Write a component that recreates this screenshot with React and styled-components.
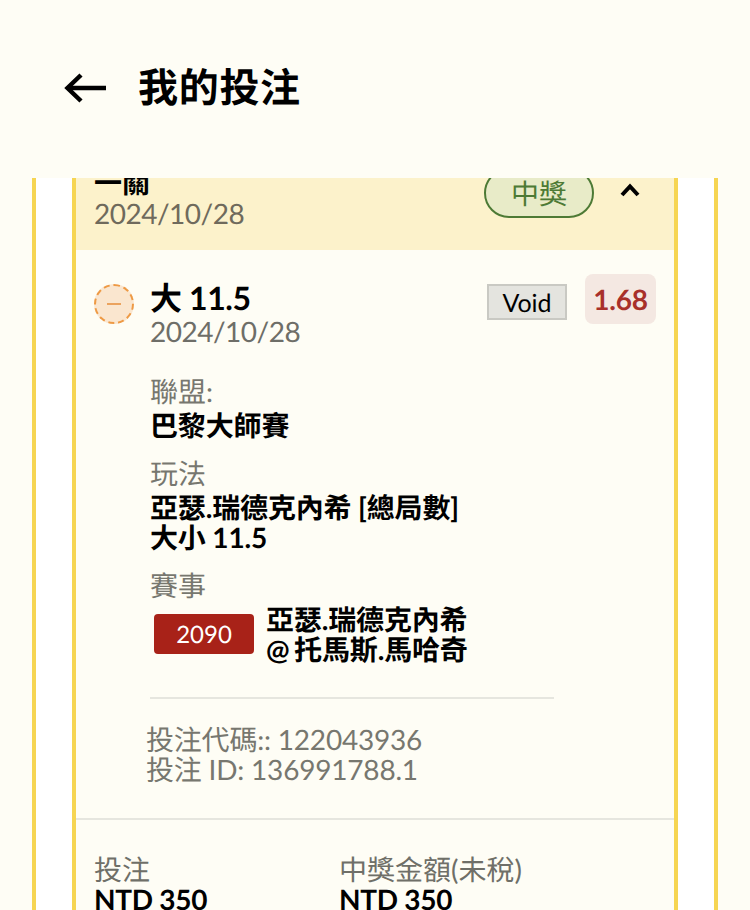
import React from "react";
import styled, { createGlobalStyle } from "styled-components";

const GlobalStyle = createGlobalStyle`
  html, body { margin: 0; padding: 0; background: #fefdf5; }
  body {
    font-family: Lato, "Noto Sans CJK TC", sans-serif;
    color: #000;
    text-rendering: geometricPrecision;
  }
`;

const Page = styled.div`
  width: 750px;
  height: 910px;
  display: flex;
  flex-direction: column;
  overflow: hidden;
  background: #fefdf5;
`;

const Header = styled.header`
  height: 178px;
  flex-shrink: 0;
  display: flex;
  align-items: center;
  padding: 0 0 0 64px;
  box-sizing: border-box;
`;

const BackIcon = styled.svg`
  width: 42px;
  height: 32px;
  margin: -2px 32px 0 0;
`;

const Title = styled.h1`
  margin: -4px 0 0;
  font-size: 40px;
  line-height: 48px;
  font-weight: 700;
  letter-spacing: 0.7px;
`;

const Scroller = styled.main`
  flex: 1;
  overflow: hidden;
`;

const OuterCard = styled.section`
  margin: -20px 32px 0;
  padding: 0 36px;
  background: #fff;
  border-left: 4px solid #f6d552;
  border-right: 4px solid #f6d552;
`;

const InnerCard = styled.div`
  background: #fefdf5;
  border-left: 4px solid #f6d552;
  border-right: 4px solid #f6d552;
`;

const CardHead = styled.div`
  height: 92px;
  box-sizing: border-box;
  padding: 0 34px 0 18px;
  background: #fcf2cb;
  display: flex;
  justify-content: space-between;
`;

const HeadText = styled.div`
  padding-top: 9px;
`;

const Parlay = styled.div`
  font-size: 28px;
  line-height: 30px;
  font-weight: 700;
`;

const DateText = styled.div`
  font-size: 28px;
  line-height: 32px;
  letter-spacing: -0.5px;
  color: #6f6a5c;
`;

const HeadRight = styled.div`
  display: flex;
  align-items: flex-start;
  gap: 26px;
`;

const StatusPill = styled.div`
  width: 110px;
  height: 50px;
  margin-top: 10px;
  box-sizing: border-box;
  border: 2px solid #4d7a35;
  border-radius: 25px;
  background: #e8ebc8;
  color: #4d7a35;
  font-size: 28px;
  line-height: 46px;
  text-align: center;
`;

const Chevron = styled.svg`
  width: 20px;
  height: 14px;
  margin-top: 25px;
`;

const Leg = styled.div`
  padding: 24px 18px 0;
  display: grid;
  grid-template-columns: 40px 1fr auto auto;
  column-gap: 16px;
  align-items: start;
  border-bottom: 2px solid #e6e6df;
`;

const LegIcon = styled.div`
  width: 40px;
  height: 40px;
  margin-top: 10px;
  box-sizing: border-box;
  border: 2px dashed #ee9a45;
  border-radius: 50%;
  background: #fae6cf;
  display: flex;
  align-items: center;
  justify-content: center;
  &::before {
    content: "";
    width: 14px;
    height: 2px;
    background: #eba35e;
  }
`;

const LegTitle = styled.div`
  font-size: 32px;
  line-height: 34px;
  font-weight: 700;
  letter-spacing: -0.4px;
  margin-top: 7px;
`;

const LegDate = styled(DateText)`
  color: #6e6e68;
`;

const VoidTag = styled.div`
  width: 80px;
  height: 36px;
  margin: 10px 2px 0 0;
  box-sizing: border-box;
  border: 2px solid #c9c9c3;
  background: #e4e4df;
  font-size: 25px;
  line-height: 35px;
  text-align: center;
`;

const Odds = styled.div`
  width: 71px;
  height: 50px;
  border-radius: 8px;
  background: #f4e8e2;
  color: #a8302a;
  font-size: 28px;
  font-weight: 700;
  letter-spacing: -0.2px;
  line-height: 50px;
  text-align: center;
`;

const Details = styled.div`
  grid-column: 1 / -1;
  padding: 28px 0 0 56px;
`;

const Label = styled.div`
  font-size: 28px;
  line-height: 32px;
  color: #77776f;
`;

const Value = styled.div`
  font-size: 28px;
  line-height: 30px;
  font-weight: 700;
  letter-spacing: -0.15px;
  margin: 3px 0 17px;
`;

const MatchRow = styled.div`
  display: flex;
  align-items: center;
  gap: 12px;
  margin: 3px 0 0 4px;
`;

const MatchNo = styled.div`
  width: 100px;
  height: 40px;
  border-radius: 4px;
  background: #a82218;
  color: #fff;
  font-size: 24px;
  line-height: 41px;
  text-align: center;
`;

const Teams = styled(Value)`
  margin: 0;
  word-spacing: -2px;
`;

const Rule = styled.hr`
  width: 404px;
  height: 2px;
  margin: 33px 0 25px;
  border: 0;
  background: #e6e6df;
`;

const Codes = styled.div`
  margin-left: -4px;
  padding-bottom: 34px;
  font-size: 28px;
  line-height: 30px;
  letter-spacing: -0.2px;
  color: #77776f;
`;

const Totals = styled.div`
  display: grid;
  grid-template-columns: 245px 1fr;
  padding: 34px 18px 0 18px;
`;

const TotalLabel = styled.div`
  font-size: 28px;
  line-height: 30px;
  color: #6f6f68;
`;

const TotalValue = styled.div`
  font-size: 28px;
  line-height: 30px;
  font-weight: 700;
  letter-spacing: -0.3px;
`;

const totals = [
  { label: "投注", value: "NTD 350" },
  { label: "中獎金額(未稅)", value: "NTD 350" },
];

export default function App() {
  return (
    <Page>
      <GlobalStyle />
      <Header>
        <BackIcon viewBox="0 0 42 32" fill="none" stroke="#000" strokeWidth="4.5">
          <path d="M42 16H4" />
          <path d="M17 3L3.5 16L17 29" />
        </BackIcon>
        <Title>我的投注</Title>
      </Header>
      <Scroller>
        <OuterCard>
          <InnerCard>
            <CardHead>
              <HeadText>
                <Parlay>一關</Parlay>
                <DateText>2024/10/28</DateText>
              </HeadText>
              <HeadRight>
                <StatusPill>中獎</StatusPill>
                <Chevron viewBox="0 0 20 14" fill="none" stroke="#000" strokeWidth="4">
                  <path d="M2 12L10 3.5L18 12" />
                </Chevron>
              </HeadRight>
            </CardHead>
            <Leg>
              <LegIcon />
              <div>
                <LegTitle>大 11.5</LegTitle>
                <LegDate>2024/10/28</LegDate>
              </div>
              <VoidTag>Void</VoidTag>
              <Odds>1.68</Odds>
              <Details>
                <Label>聯盟:</Label>
                <Value>巴黎大師賽</Value>
                <Label>玩法</Label>
                <Value>
                  亞瑟.瑞德克內希 [總局數]
                  <br />
                  大小 11.5
                </Value>
                <Label>賽事</Label>
                <MatchRow>
                  <MatchNo>2090</MatchNo>
                  <Teams>
                    亞瑟.瑞德克內希
                    <br />@ 托馬斯.馬哈奇
                  </Teams>
                </MatchRow>
                <Rule />
                <Codes>
                  投注代碼:: 122043936
                  <br />
                  投注 ID: 136991788.1
                </Codes>
              </Details>
            </Leg>
            <Totals>
              {totals.map((t) => (
                <div key={t.label}>
                  <TotalLabel>{t.label}</TotalLabel>
                  <TotalValue>{t.value}</TotalValue>
                </div>
              ))}
            </Totals>
          </InnerCard>
        </OuterCard>
      </Scroller>
    </Page>
  );
}
